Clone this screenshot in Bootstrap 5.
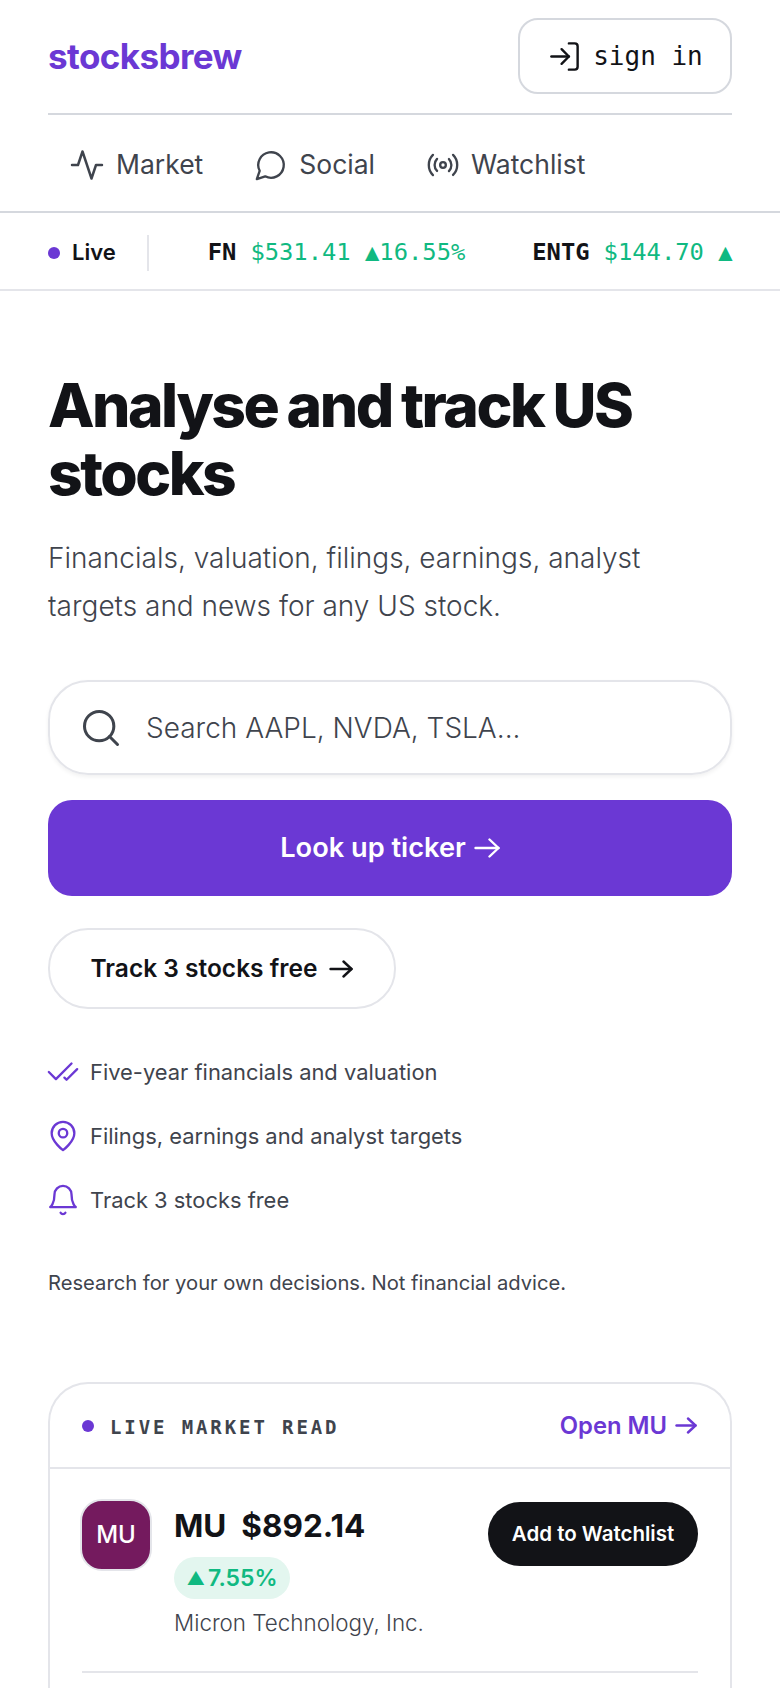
<!DOCTYPE html>
<html lang="en">

<head>
    <meta charset="UTF-8">
    <meta name="viewport" content="width=device-width, initial-scale=1.0">
    <title>stocksbrew</title>
    <link href="https://cdn.jsdelivr.net/npm/bootstrap@5.3.0/dist/css/bootstrap.min.css" rel="stylesheet">
    <style>
        html, body { height: 1688px; overflow: hidden; }
        body { font-family: Inter, "Noto Sans", sans-serif; color: #3f444d; background: #fff; }
        svg.ico { fill: none; stroke: currentColor; stroke-width: 1.65; stroke-linecap: round; stroke-linejoin: round; flex-shrink: 0; }
        svg.ico.arrow { stroke-width: 2.4; }
        .mono { font-family: "DejaVu Sans Mono", "Liberation Mono", monospace; }
        .top-bar { height: 115px; margin: 0 48px; padding-top: 18px; border-bottom: 2px solid #d5d8de; }
        .brand-name { font-size: 35px; font-weight: 700; letter-spacing: -.6px; color: #6b38d4; line-height: 1; margin-top: 21px; }
        .signin-btn { width: 214px; height: 76px; gap: 11px; border: 2px solid #d5d8de; border-radius: 20px; background: #fff; color: #121317; font-size: 26px; }
        .main-links { height: 98px; padding: 3px 0 0 69px; gap: 51px; border-bottom: 2px solid #d5d8de; }
        .main-links a { color: #3f444d; text-decoration: none; font-size: 26.5px; gap: 11px; }
        .ticker-bar { height: 78px; padding: 3px 48px 0; border-bottom: 2px solid #e4e5ea; }
        .pulse-dot { width: 12px; height: 12px; border-radius: 50%; background: #6b38d4; margin-right: 12px; }
        .live-word { font-size: 22px; font-weight: 600; color: #121317; }
        .ticker-sep { width: 2px; height: 36px; background: #e4e5ea; margin-left: 31px; }
        .ticker-track { padding-left: 59px; }
        .tick { font-size: 23.8px; white-space: nowrap; color: #10b981; margin-right: 67px; }
        .tick:last-child { margin-right: 0; }
        .tick b { color: #121317; margin-right: 14px; font-weight: 700; }
        .hero { padding: 0 48px; }
        .hero h1 { margin: 80px 0 0; font-size: 60.5px; line-height: 68px; font-weight: 800; letter-spacing: -2.5px; word-spacing: -1.5px; color: #121317; }
        .hero-sub { margin: 27px 0 0; font-size: 28px; line-height: 48px; font-weight: 300; }
        .search-box { height: 95px; margin-top: 50px; padding: 0 29px; gap: 23px; border: 2px solid #e4e5ea; border-radius: 40px; box-shadow: 0 2px 4px rgba(18,19,23,.06); font-size: 28px; font-weight: 300; }
        .lookup-btn { height: 96px; margin-top: 25px; border: 0; border-radius: 24px; background: #6b38d4; color: #fff; font-size: 27.2px; font-weight: 600; gap: 8px; width: 100%; }
        .track-btn { height: 81px; width: 348px; margin-top: 32px; border: 2px solid #e4e5ea; border-radius: 40px; background: #fff; color: #121317; font-size: 24.5px; font-weight: 600; gap: 12px; }
        .perk-list { margin-top: 47px; gap: 32px; font-size: 21.9px; font-weight: 400; }
        .perk-list > div { height: 32px; gap: 10px; }
        .perk-list svg { color: #6b38d4; margin-left: -2px; }
        .fine-print { margin: 51px 0 0; font-size: 20.2px; line-height: 32px; }
        .market-panel { margin-top: 83px; border: 2px solid #e4e5ea; border-radius: 40px 40px 0 0; border-bottom: 0; height: 400px; }
        .panel-head { height: 85px; padding: 0 33px 0 32px; border-bottom: 2px solid #e4e5ea; }
        .panel-label { font-size: 19px; font-weight: 700; letter-spacing: 2.9px; color: #3f444d; margin-left: 4px; padding-top: 3px; }
        .open-link { color: #6b38d4; font-size: 23.8px; font-weight: 600; text-decoration: none; gap: 8px; }
        .panel-body { margin: 0 32px; padding-top: 30px; height: 204px; border-bottom: 2px solid #e4e5ea; }
        .mu-logo { width: 72px; height: 72px; margin-left: -2px; border: 2px solid #e4e5ea; border-radius: 22px; background: #741a5e; color: #fff; font-size: 24px; font-weight: 500; }
        .mu-info { margin-left: 22px; }
        .mu-title { font-size: 31.5px; font-weight: 700; line-height: 48px; color: #121317; margin-top: 3px; }
        .mu-change { width: 116px; height: 42px; margin-top: 7px; border-radius: 21px; background: #e3f6ef; color: #10b981; font-size: 23px; font-weight: 600; }
        .mu-tri { font-size: 18px; margin-right: 3px; }
        .mu-name { font-size: 22.4px; line-height: 36px; font-weight: 300; margin-top: 6px; }
        .watch-btn { width: 210px; height: 64px; margin-top: 3px; border: 0; border-radius: 32px; background: #121317; color: #fff; font-size: 20.5px; font-weight: 600; }
    </style>
</head>

<body>
    <div class="top-bar d-flex justify-content-between align-items-start">
        <div class="brand-name">stocksbrew</div>
        <button class="signin-btn mono d-flex align-items-center justify-content-center">
            <svg class="ico" width="35" height="35" viewBox="0 0 24 24"><path d="M15 3h4a2 2 0 0 1 2 2v14a2 2 0 0 1-2 2h-4"/><path d="m10 17 5-5-5-5"/><path d="M15 12H3"/></svg>
            sign in
        </button>
    </div>

    <nav class="main-links d-flex align-items-center">
        <a href="#" class="d-flex align-items-center">
            <svg class="ico" width="36" height="36" viewBox="0 0 24 24"><path d="M22 12h-4l-3 9L9 3l-3 9H2"/></svg>Market
        </a>
        <a href="#" class="d-flex align-items-center">
            <svg class="ico" width="34" height="34" viewBox="0 0 24 24"><path d="M7.9 20A9 9 0 1 0 4 16.1L2 22Z"/></svg>Social
        </a>
        <a href="#" class="d-flex align-items-center">
            <svg class="ico" width="34" height="34" viewBox="0 0 24 24"><path d="M4.9 19.1C1 15.2 1 8.8 4.9 4.9"/><path d="M7.8 16.2c-2.3-2.3-2.3-6.1 0-8.5"/><circle cx="12" cy="12" r="2"/><path d="M16.2 7.8c2.3 2.3 2.3 6.1 0 8.5"/><path d="M19.1 4.9C23 8.8 23 15.1 19.1 19"/></svg>Watchlist
        </a>
    </nav>

    <div class="ticker-bar d-flex align-items-center">
        <span class="pulse-dot flex-shrink-0"></span>
        <span class="live-word">Live</span>
        <span class="ticker-sep flex-shrink-0"></span>
        <div class="ticker-track d-flex flex-grow-1">
            <span class="tick mono"><b>FN</b>$531.41 ▲16.55%</span>
            <span class="tick mono"><b>ENTG</b>$144.70 ▲</span>
        </div>
    </div>

    <div class="hero">
        <h1>Analyse and track US stocks</h1>
        <p class="hero-sub">Financials, valuation, filings, earnings, analyst targets and news for any US stock.</p>

        <div class="search-box d-flex align-items-center">
            <svg class="ico" width="44" height="44" viewBox="0 0 24 24"><circle cx="11" cy="11" r="8"/><path d="m21 21-4.35-4.35"/></svg>
            Search AAPL, NVDA, TSLA...
        </div>

        <button class="lookup-btn d-flex align-items-center justify-content-center">
            Look up ticker
            <svg class="ico arrow" width="26" height="20" viewBox="0 0 26 20"><path d="M1.5 10h23"/><path d="m15.5 1.5 9 8.5-9 8.5"/></svg>
        </button>

        <button class="track-btn d-flex align-items-center justify-content-center">
            Track 3 stocks free
            <svg class="ico arrow" width="24" height="18" viewBox="0 0 24 18"><path d="M1.5 9h21"/><path d="m14.5 1.5 8 7.5-8 7.5"/></svg>
        </button>

        <div class="perk-list d-flex flex-column">
            <div class="d-flex align-items-center">
                <svg class="ico" width="34" height="34" viewBox="0 0 24 24"><path d="M18 6 7 17l-5-5"/><path d="m22 10-7.5 7.5L13 16"/></svg>
                Five-year financials and valuation
            </div>
            <div class="d-flex align-items-center">
                <svg class="ico" width="34" height="34" viewBox="0 0 24 24"><path d="M20 10c0 6-8 12-8 12s-8-6-8-12a8 8 0 0 1 16 0Z"/><circle cx="12" cy="10" r="3"/></svg>
                Filings, earnings and analyst targets
            </div>
            <div class="d-flex align-items-center">
                <svg class="ico" width="34" height="34" viewBox="0 0 24 24"><path d="M6 8a6 6 0 0 1 12 0c0 7 3 9 3 9H3s3-2 3-9"/><path d="M10.3 21a1.94 1.94 0 0 0 3.4 0"/></svg>
                Track 3 stocks free
            </div>
        </div>

        <p class="fine-print">Research for your own decisions. Not financial advice.</p>

        <div class="market-panel">
            <div class="panel-head d-flex align-items-center">
                <span class="pulse-dot flex-shrink-0"></span>
                <span class="panel-label mono">LIVE MARKET READ</span>
                <a href="#" class="open-link ms-auto d-flex align-items-center">Open MU
                    <svg class="ico arrow" width="22" height="17" viewBox="0 0 22 17"><path d="M1.5 8.5h19"/><path d="m13 1.5 7.5 7-7.5 7"/></svg>
                </a>
            </div>
            <div class="panel-body d-flex align-items-start">
                <div class="mu-logo d-flex align-items-center justify-content-center flex-shrink-0">MU</div>
                <div class="mu-info flex-grow-1">
                    <div class="mu-title">MU&nbsp; $892.14</div>
                    <div class="mu-change d-flex align-items-center justify-content-center"><span class="mu-tri">▲</span>7.55%</div>
                    <div class="mu-name">Micron Technology, Inc.</div>
                </div>
                <button class="watch-btn flex-shrink-0">Add to Watchlist</button>
            </div>
        </div>
    </div>

    <script src="https://cdn.jsdelivr.net/npm/bootstrap@5.3.0/dist/js/bootstrap.bundle.min.js"></script>
</body>

</html>
